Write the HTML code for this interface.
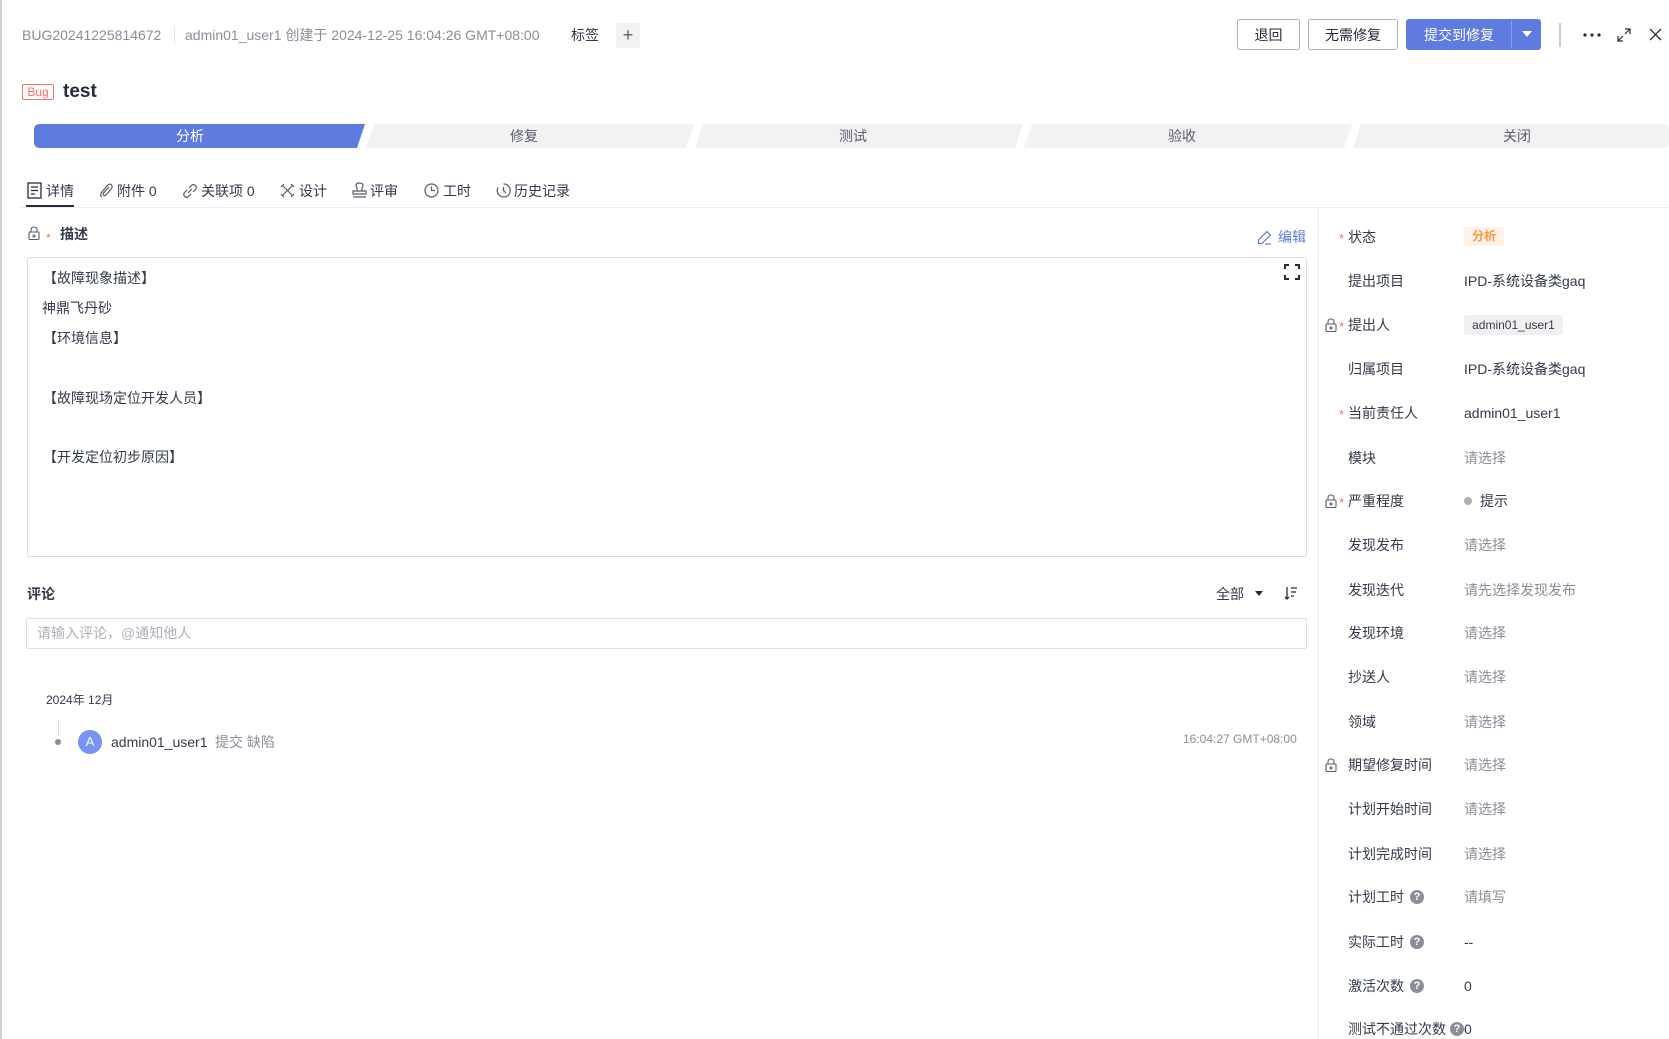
<!DOCTYPE html>
<html><head><meta charset="utf-8">
<style>
*{margin:0;padding:0;box-sizing:border-box}
html,body{width:1669px;height:1039px;overflow:hidden;background:#fff}
body{font-family:"Liberation Sans","Noto Sans CJK SC",sans-serif;color:#333a4a;font-size:14px;position:relative}
.a{position:absolute;white-space:nowrap;line-height:1}
.g{color:#8a8e99}
.btn{position:absolute;top:19px;height:31px;border:1px solid #adb0b8;border-radius:3px;font-size:14px;display:flex;align-items:center;justify-content:center;background:#fff;color:#252b3a}
.lbl{position:absolute;left:1348px;font-size:14px;line-height:1;font-weight:normal}
.val{position:absolute;left:1464px;font-size:14px;line-height:1}
.star{position:absolute;left:1339px;color:#f66f6a;font-size:13px;line-height:1}
.lock{position:absolute;left:1325px}
.q{display:inline-block;width:14px;height:14px;border-radius:50%;background:#8a8e99;color:#fff;font-size:11px;text-align:center;line-height:14px;font-weight:bold;vertical-align:top;margin-left:6px}
.ph{color:#8a8e99}
.ln{position:absolute;left:43px;font-size:14px;line-height:1}
</style></head><body>
<div class="a" style="left:0;top:0;width:2px;height:1039px;background:#d0d0d0"></div>

<!-- header -->
<div class="a g" style="left:22px;top:28px;font-size:14px">BUG20241225814672</div>
<div class="a" style="left:174px;top:27px;width:1px;height:16px;background:#dfe1e6"></div>
<div class="a g" style="left:185px;top:28px;font-size:14px">admin01_user1 创建于 2024-12-25 16:04:26 GMT+08:00</div>
<div class="a" style="left:571px;top:28px;font-size:14px">标签</div>
<div class="a" style="left:616px;top:23px;width:24px;height:25px;background:#f2f2f3;border-radius:2px;text-align:center;line-height:25px;font-size:18px;color:#575d6c">+</div>

<div class="btn" style="left:1237px;width:63px">退回</div>
<div class="btn" style="left:1308px;width:90px">无需修复</div>
<div class="btn" style="left:1406px;width:135px;background:#5e7ce0;border-color:#5e7ce0;color:#fff;justify-content:flex-start;padding-left:17px">提交到修复</div>
<div class="a" style="left:1511px;top:21px;width:1px;height:27px;background:#8aa0ea"></div>
<svg class="a" style="left:1522px;top:31px" width="10" height="6"><path d="M0 0H10L5 6Z" fill="#fff"/></svg>
<div class="a" style="left:1559px;top:23px;width:2px;height:24px;background:#c9ccd2"></div>
<svg class="a" style="left:1583px;top:33px" width="18" height="4"><circle cx="2" cy="2" r="1.6" fill="#252b3a"/><circle cx="9" cy="2" r="1.6" fill="#252b3a"/><circle cx="16" cy="2" r="1.6" fill="#252b3a"/></svg>
<svg class="a" style="left:1617px;top:28px" width="14" height="14" fill="none" stroke="#252b3a" stroke-width="1.2"><path d="M8 1H13V6M13 1L8 6M6 13H1V8M1 13L6 8"/></svg>
<svg class="a" style="left:1649px;top:28px" width="13" height="13" stroke="#252b3a" stroke-width="1.3"><path d="M1 1L12 12M12 1L1 12"/></svg>

<!-- title -->
<div class="a" style="left:22px;top:84px;width:32px;height:16px;border:1px solid #f66f6a;border-radius:2px;color:#f66f6a;font-size:12px;text-align:center;line-height:14px">Bug</div>
<div class="a" style="left:63px;top:82px;font-size:19px;font-weight:600;color:#252b3a">test</div>

<!-- stages -->
<svg class="a" style="left:0;top:124px" width="1669" height="24">
<path d="M40 0H365L357 24H40Q34 24 34 18V6Q34 0 40 0Z" fill="#5e7ce0"/>
<path d="M374 0H694L686 24H366Z" fill="#f2f2f2"/>
<path d="M703 0H1023L1015 24H695Z" fill="#f2f2f2"/>
<path d="M1032 0H1352L1344 24H1024Z" fill="#f2f2f2"/>
<path d="M1361 0H1663Q1669 0 1669 6V18Q1669 24 1663 24H1353Z" fill="#f2f2f2"/>
</svg>
<div class="a" style="left:176px;top:129px;color:#fff;font-size:14px">分析</div>
<div class="a" style="left:510px;top:129px;color:#575d6c;font-size:14px">修复</div>
<div class="a" style="left:839px;top:129px;color:#575d6c;font-size:14px">测试</div>
<div class="a" style="left:1168px;top:129px;color:#575d6c;font-size:14px">验收</div>
<div class="a" style="left:1503px;top:129px;color:#575d6c;font-size:14px">关闭</div>

<!-- tabs -->
<svg class="a" style="left:27px;top:182px" width="15" height="17" fill="none" stroke="#252b3a" stroke-width="1.3"><rect x="1" y="1" width="13" height="15"/><path d="M4 5H11M4 8.5H11M4 12H8"/></svg>
<div class="a" style="left:46px;top:184px;font-size:14px">详情</div>
<div class="a" style="left:26px;top:205px;width:48px;height:2px;background:#252b3a"></div>
<svg class="a" style="left:99px;top:183px" width="14" height="15" fill="none" stroke="#575d6c" stroke-width="1.2"><path d="M10 4L4.5 10Q3.5 11.5 5 12.5Q6.5 13 7.5 11.5L12.5 5.5Q14 3 12 1.5Q10 0.5 8.5 2.5L2.5 9.5Q0.5 12.5 3 14"/></svg>
<div class="a" style="left:117px;top:184px;font-size:14px">附件 0</div>
<svg class="a" style="left:182px;top:183px" width="16" height="16" fill="none" stroke="#575d6c" stroke-width="1.2"><path d="M7 5L9.5 2.5Q11.5 0.8 13.5 2.5Q15 4.5 13.5 6.5L11 9M9 11L6.5 13.5Q4.5 15.2 2.5 13.5Q1 11.5 2.5 9.5L5 7M6 10L10 6"/></svg>
<div class="a" style="left:201px;top:184px;font-size:14px">关联项 0</div>
<svg class="a" style="left:280px;top:183px" width="15" height="15" fill="none" stroke="#575d6c" stroke-width="1.2"><path d="M2 2L13 13M13 2L2 13M1 4L4 1M11 14L14 11M11 1L14 4M1 11L4 14"/></svg>
<div class="a" style="left:299px;top:184px;font-size:14px">设计</div>
<svg class="a" style="left:352px;top:182px" width="15" height="16" fill="none" stroke="#575d6c" stroke-width="1.2"><path d="M5 9V6Q4 5 4 3.5Q4 1 7.5 1Q11 1 11 3.5Q11 5 10 6V9M1 9H14V12H1ZM1 15H14"/></svg>
<div class="a" style="left:370px;top:184px;font-size:14px">评审</div>
<svg class="a" style="left:424px;top:183px" width="15" height="15" fill="none" stroke="#575d6c" stroke-width="1.2"><circle cx="7.5" cy="7.5" r="6.5"/><path d="M7.5 3.5V7.5H11"/></svg>
<div class="a" style="left:443px;top:184px;font-size:14px">工时</div>
<svg class="a" style="left:496px;top:183px" width="15" height="15" fill="none" stroke="#575d6c" stroke-width="1.2"><path d="M7.5 1A6.5 6.5 0 1 1 2 4.5"/><path d="M7.5 4V7.5L10 10"/></svg>
<div class="a" style="left:514px;top:184px;font-size:14px">历史记录</div>
<div class="a" style="left:20px;top:207px;width:1649px;height:1px;background:#eceef1"></div>
<div class="a" style="left:1318px;top:208px;width:1px;height:831px;background:#eceef1"></div>

<!-- description -->
<svg class="a" style="left:28px;top:226px" width="12" height="14" fill="none" stroke="#575d6c" stroke-width="1.1"><path d="M3 6V4Q3 1 6 1Q9 1 9 4V6"/><rect x="1" y="6" width="10" height="7.5" rx="1"/><circle cx="6" cy="10" r="1"/></svg>
<div class="a" style="left:46px;top:232px;color:#f66f6a;font-size:12px">*</div>
<div class="a" style="left:60px;top:227px;font-size:14px;font-weight:bold">描述</div>
<svg class="a" style="left:1257px;top:230px" width="15" height="15" fill="none" stroke="#5e7ce0" stroke-width="1.2"><path d="M10 1.5L13.5 5L5 13.5H1.5V10Z"/><path d="M8 14H14"/></svg>
<div class="a" style="left:1278px;top:230px;font-size:14px;color:#5e7ce0">编辑</div>
<div class="a" style="left:27px;top:257px;width:1280px;height:300px;border:1px solid #dfe1e6;border-radius:2px"></div>
<svg class="a" style="left:1284px;top:264px" width="16" height="16" fill="none" stroke="#252b3a" stroke-width="2"><path d="M1 5V1H5M11 1H15V5M15 11V15H11M5 15H1V11"/></svg>
<div class="ln" style="top:271px">【故障现象描述】</div>
<div class="ln" style="top:301px;left:42px">神鼎飞丹砂</div>
<div class="ln" style="top:331px">【环境信息】</div>
<div class="ln" style="top:391px">【故障现场定位开发人员】</div>
<div class="ln" style="top:450px">【开发定位初步原因】</div>

<!-- comments -->
<div class="a" style="left:27px;top:587px;font-size:14px;font-weight:bold">评论</div>
<div class="a" style="left:1216px;top:587px;font-size:14px">全部</div>
<svg class="a" style="left:1255px;top:591px" width="8" height="5"><path d="M0 0H8L4 5Z" fill="#252b3a"/></svg>
<svg class="a" style="left:1284px;top:586px" width="14" height="14" fill="none" stroke="#252b3a" stroke-width="1.3"><path d="M3 1V13M1 11L3 13L5 11M7 2H13M7 6H12M7 10H10"/></svg>
<div class="a" style="left:26px;top:618px;width:1281px;height:31px;border:1px solid #dfe1e6;border-radius:2px"></div>
<div class="a" style="left:37px;top:626px;font-size:14px;color:#adb0b8">请输入评论，@通知他人</div>
<div class="a" style="left:46px;top:694px;font-size:12px">2024年 12月</div>
<div class="a" style="left:58px;top:720px;width:1px;height:16px;background:#dfe1e6"></div>
<div class="a" style="left:55px;top:739px;width:6px;height:6px;border-radius:50%;background:#8a8e99"></div>
<div class="a" style="left:78px;top:730px;width:24px;height:24px;border-radius:50%;background:#7693f5;color:#fff;font-size:13px;text-align:center;line-height:24px">A</div>
<div class="a" style="left:111px;top:735px;font-size:14px">admin01_user1</div>
<div class="a g" style="left:215px;top:735px;font-size:14px">提交 缺陷</div>
<div class="a g" style="left:1183px;top:733px;font-size:12px">16:04:27 GMT+08:00</div>

<!-- right panel -->
<div class="star" style="top:232px">*</div><div class="lbl" style="top:230px">状态</div>
<div class="a" style="left:1464px;top:227px;width:40px;height:19px;background:#fff1e6;border-radius:2px;color:#fa9841;font-size:12px;font-weight:bold;text-align:center;line-height:19px">分析</div>

<div class="lbl" style="top:274px">提出项目</div><div class="val" style="top:274px">IPD-系统设备类gaq</div>

<svg class="lock" style="top:318px" width="12" height="14" fill="none" stroke="#575d6c" stroke-width="1.1"><path d="M3 6V4Q3 1 6 1Q9 1 9 4V6"/><rect x="1" y="6" width="10" height="7.5" rx="1"/><circle cx="6" cy="10" r="1"/></svg>
<div class="star" style="top:320px">*</div><div class="lbl" style="top:318px">提出人</div>
<div class="a" style="left:1464px;top:315px;width:99px;height:20px;background:#f0f0f0;border-radius:3px;font-size:12px;text-align:center;line-height:20px">admin01_user1</div>

<div class="lbl" style="top:362px">归属项目</div><div class="val" style="top:362px">IPD-系统设备类gaq</div>
<div class="star" style="top:408px">*</div><div class="lbl" style="top:406px">当前责任人</div><div class="val" style="top:406px">admin01_user1</div>
<div class="lbl" style="top:451px">模块</div><div class="val ph" style="top:451px">请选择</div>

<svg class="lock" style="top:494px" width="12" height="14" fill="none" stroke="#575d6c" stroke-width="1.1"><path d="M3 6V4Q3 1 6 1Q9 1 9 4V6"/><rect x="1" y="6" width="10" height="7.5" rx="1"/><circle cx="6" cy="10" r="1"/></svg>
<div class="star" style="top:496px">*</div><div class="lbl" style="top:494px">严重程度</div>
<div class="a" style="left:1464px;top:497px;width:8px;height:8px;border-radius:50%;background:#adb0b8"></div>
<div class="val" style="top:494px;left:1480px">提示</div>

<div class="lbl" style="top:538px">发现发布</div><div class="val ph" style="top:538px">请选择</div>
<div class="lbl" style="top:583px">发现迭代</div><div class="val ph" style="top:583px">请先选择发现发布</div>
<div class="lbl" style="top:626px">发现环境</div><div class="val ph" style="top:626px">请选择</div>
<div class="lbl" style="top:670px">抄送人</div><div class="val ph" style="top:670px">请选择</div>
<div class="lbl" style="top:715px">领域</div><div class="val ph" style="top:715px">请选择</div>
<svg class="lock" style="top:758px" width="12" height="14" fill="none" stroke="#575d6c" stroke-width="1.1"><path d="M3 6V4Q3 1 6 1Q9 1 9 4V6"/><rect x="1" y="6" width="10" height="7.5" rx="1"/><circle cx="6" cy="10" r="1"/></svg>
<div class="lbl" style="top:758px">期望修复时间</div><div class="val ph" style="top:758px">请选择</div>
<div class="lbl" style="top:802px">计划开始时间</div><div class="val ph" style="top:802px">请选择</div>
<div class="lbl" style="top:847px">计划完成时间</div><div class="val ph" style="top:847px">请选择</div>
<div class="lbl" style="top:890px">计划工时<span class="q">?</span></div><div class="val ph" style="top:890px">请填写</div>
<div class="lbl" style="top:935px">实际工时<span class="q">?</span></div><div class="val" style="top:935px">--</div>
<div class="lbl" style="top:979px">激活次数<span class="q">?</span></div><div class="val" style="top:979px">0</div>
<div class="lbl" style="top:1022px">测试不通过次数<span class="q" style="margin-left:4px">?</span>0</div>
</body></html>
